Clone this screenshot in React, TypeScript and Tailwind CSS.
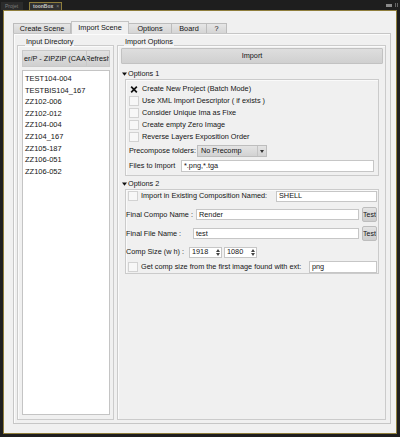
import React from "react";

const Tri = () => (
  <svg width="5" height="4" viewBox="0 0 5 4" className="mr-[1px]">
    <path d="M0 0.5H5L2.5 3.8Z" fill="#111" />
  </svg>
);

const Check = ({ checked }: { checked?: boolean }) => (
  <span
    className={
      "w-[10px] h-[10px] border flex items-center justify-center shrink-0 " +
      (checked ? "border-transparent bg-transparent" : "border-[#d2d2d2] bg-[#f7f7f7]")
    }
  >
    {checked && (
      <svg width="9" height="9" viewBox="0 0 9 9">
        <path d="M1.3 1.3L7.7 7.7M7.7 1.3L1.3 7.7" stroke="#111" strokeWidth="1.9" />
      </svg>
    )}
  </span>
);

const Field = ({ value, className }: { value: string; className: string }) => (
  <div className={"border border-[#c6c6c6] bg-white flex items-center px-[2px] whitespace-nowrap overflow-hidden " + className}>
    {value}
  </div>
);

const Spin = ({ value, className }: { value: string; className: string }) => (
  <div className={"border border-[#c6c6c6] bg-white flex items-center pl-[2px] " + className}>
    <span className="flex-1">{value}</span>
    <span className="flex flex-col items-center justify-center w-[7px] h-full gap-[1px]">
      <svg width="4" height="3" viewBox="0 0 4 3"><path d="M0 3H4L2 0Z" fill="#444" /></svg>
      <svg width="4" height="3" viewBox="0 0 4 3"><path d="M0 0H4L2 3Z" fill="#444" /></svg>
    </span>
  </div>
);

const TestBtn = () => (
  <div className="w-[15px] h-[15px] border border-[#bdbdbd] rounded-[2px] bg-linear-to-b from-[#e4e4e4] to-[#cdcdcd] flex items-center justify-center overflow-hidden whitespace-nowrap text-[7px]">
    Test
  </div>
);

const CheckRow = ({ label, checked }: { label: string; checked?: boolean }) => (
  <div className="h-[12px] flex items-center gap-[3px]">
    <Check checked={checked} />
    <span>{label}</span>
  </div>
);

const items = [
  "TEST104-004",
  "TESTBIS104_167",
  "ZZ102-006",
  "ZZ102-012",
  "ZZ104-004",
  "ZZ104_167",
  "ZZ105-187",
  "ZZ106-051",
  "ZZ106-052",
];

export default function App() {
  return (
    <div className="w-[400px] h-[437px] bg-[#1e1e1e] flex flex-col font-['Liberation_Sans',Arial,sans-serif] text-[#141414] text-[7.3px] leading-none overflow-hidden">
      {/* top dock bar */}
      <div className="h-[10px] flex items-end pl-[1px] pr-[2px] shrink-0">
        <div className="h-[8px] w-[22px] bg-[#2b2b2b] text-[#7c7c7c] text-[5px] flex items-center pl-[4px]">Projet</div>
        <div className="h-[8px] w-[33px] ml-[6px] border border-b-0 border-[#8f7e3c] bg-[#303030] text-[#c9c9c9] text-[5px] font-bold flex items-center pl-[3px] gap-[3px]">
          <span>toonBox</span>
          <span className="text-[#888] font-normal">×</span>
        </div>
        <div className="flex-1" />
        <div className="h-[8px] flex items-center gap-[3px] pb-[2px]">
          <span className="w-[6px] h-[3px] bg-[#8a8a8a]" />
          <span className="w-[3px] h-[4px] border-x border-[#666]" />
        </div>
      </div>

      {/* main panel */}
      <div className="mx-[3px] h-[424px] border border-[#8f7e3c] bg-[#f0f0f0] pl-[9px] pt-[10px] shrink-0">
        {/* tabs */}
        <div className="flex items-end h-[12px] relative z-10">
          <div className="h-[10px] w-[58px] border border-b-0 border-[#bcbcbc] bg-linear-to-b from-[#e6e6e6] to-[#d5d5d5] flex items-center justify-center">Create Scene</div>
          <div className="h-[13px] -mb-[1px] w-[58px] border border-b-0 border-[#c4c4c4] bg-[#f0f0f0] flex items-center justify-center">Import Scene</div>
          <div className="h-[10px] w-[43px] border border-b-0 border-l-0 border-[#bcbcbc] bg-linear-to-b from-[#e6e6e6] to-[#d5d5d5] flex items-center justify-center">Options</div>
          <div className="h-[10px] w-[35px] border border-b-0 border-l-0 border-[#bcbcbc] bg-linear-to-b from-[#e6e6e6] to-[#d5d5d5] flex items-center justify-center">Board</div>
          <div className="h-[10px] w-[20px] border border-b-0 border-l-0 border-[#bcbcbc] bg-linear-to-b from-[#e6e6e6] to-[#d5d5d5] flex items-center justify-center">?</div>
        </div>

        {/* tab pane */}
        <div className="w-[378px] h-[391px] border border-[#c6c6c6] shadow-[inset_1px_1px_0_#fbfbfb] flex gap-[3px] pl-[3px] pt-[3px]">
          {/* Input Directory */}
          <fieldset className="w-[97px] h-[383px] border border-[#cbcbcb] shadow-[inset_1px_1px_0_#fafafa] pl-[4px] min-w-0">
            <legend className="ml-[3px] px-[1px] leading-[9px] pb-[8px]">Input Directory</legend>
            <div className="-mt-[4px] flex h-[17px]">
              <div className="w-[65px] h-[17px] bg-linear-to-b from-[#e2e2e2] to-[#cfcfcf] border border-[#c9c9c9] flex items-center overflow-hidden whitespace-nowrap pl-[1px]">er/P - ZIPZIP (CAA</div>
              <div className="w-[23px] h-[17px] bg-linear-to-b from-[#e2e2e2] to-[#cfcfcf] border border-l-0 border-[#c9c9c9] flex items-center justify-center overflow-hidden whitespace-nowrap">
                <span className="shrink-0">Refresh</span>
              </div>
            </div>
            <div className="mt-[3px] w-[88px] h-[345px] bg-white border border-[#c4c4c4] pl-[2px] pt-[2px] leading-[11.6px] text-[7.5px]">
              {items.map((t) => (
                <div key={t}>{t}</div>
              ))}
            </div>
          </fieldset>

          {/* Import Options */}
          <fieldset className="w-[269px] h-[383px] border border-[#cbcbcb] shadow-[inset_1px_1px_0_#fafafa] pl-[3px] pr-[2px] min-w-0">
            <legend className="ml-[3px] px-[1px] leading-[9px] pb-[8px]">Import Options</legend>
            <div className="-mt-[6px] h-[16px] bg-linear-to-b from-[#dedede] to-[#d0d0d0] border border-[#c2c2c2] rounded-[1px] flex items-center justify-center">Import</div>

            <div className="mt-[5px] h-[10px] flex items-center pl-[1px]"><Tri />Options 1</div>
            <div className="mx-[4px] border border-[#cbcbcb] shadow-[inset_1px_1px_0_#fafafa] pl-[3px] pr-[4px] pt-[3px] pb-[3px]">
              <CheckRow label="Create New Project (Batch Mode)" checked />
              <CheckRow label="Use XML Import Descriptor ( if exists )" />
              <CheckRow label="Consider Unique Ima as Fixe" />
              <CheckRow label="Create empty Zero  Image" />
              <CheckRow label="Reverse Layers Exposition Order" />
              <div className="mt-[2px] h-[12px] flex items-center">
                <span className="w-[68px] whitespace-nowrap">Precompose folders:</span>
                <div className="w-[70px] h-[12px] border border-[#bdbdbd] bg-linear-to-b from-[#e4e4e4] to-[#d2d2d2] flex items-center">
                  <span className="flex-1 pl-[3px]">No Precomp</span>
                  <span className="w-[9px] h-full flex items-center justify-center border-l border-[#c4c4c4]">
                    <svg width="4" height="3" viewBox="0 0 4 3"><path d="M0 0H4L2 3Z" fill="#333" /></svg>
                  </span>
                </div>
              </div>
              <div className="mt-[3px] h-[12px] flex items-center">
                <span className="w-[52px] whitespace-nowrap">Files to Import</span>
                <Field value="*.png,*.tga" className="flex-1 h-[12px]" />
              </div>
            </div>

            <div className="mt-[3px] h-[10px] flex items-center pl-[1px]"><Tri />Options 2</div>
            <div className="mx-[4px] border border-[#cbcbcb] shadow-[inset_1px_1px_0_#fafafa] pr-[1px]">
              <div className="h-[12px] flex items-center">
                <div className="ml-[2px] flex items-center gap-[3px] w-[148px]">
                  <Check />
                  <span className="whitespace-nowrap">Import in Existing Composition Named:</span>
                </div>
                <Field value="SHELL" className="flex-1 h-[11px]" />
              </div>
              <div className="mt-[5px] h-[15px] flex items-center">
                <span className="w-[70px] whitespace-nowrap">Final Compo Name :</span>
                <Field value="Render" className="w-[163px] h-[11px]" />
                <div className="ml-[3px]"><TestBtn /></div>
              </div>
              <div className="mt-[4px] h-[15px] flex items-center">
                <span className="w-[67px] whitespace-nowrap">Final File Name :</span>
                <Field value="test" className="w-[166px] h-[11px]" />
                <div className="ml-[3px]"><TestBtn /></div>
              </div>
              <div className="mt-[5px] h-[12px] flex items-center">
                <span className="w-[63px] whitespace-nowrap">Comp Size (w h) :</span>
                <Spin value="1918" className="w-[33px] h-[11px]" />
                <Spin value="1080" className="ml-[2px] w-[33px] h-[11px]" />
              </div>
              <div className="mt-[3px] h-[12px] flex items-center">
                <div className="ml-[2px] flex items-center gap-[3px] w-[181px]">
                  <Check />
                  <span className="whitespace-nowrap">Get comp size from the first image found with ext:</span>
                </div>
                <Field value="png" className="flex-1 h-[12px]" />
              </div>
            </div>
          </fieldset>
        </div>
      </div>
    </div>
  );
}
